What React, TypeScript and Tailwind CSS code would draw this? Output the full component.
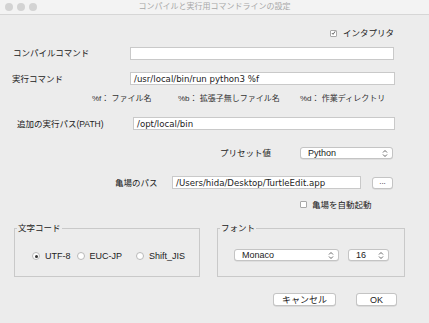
import React from "react";

function UpDown() {
  return (
    <svg width="6" height="9" viewBox="0 0 6 9" className="shrink-0">
      <path d="M1 3.5 L3 1.5 L5 3.5" fill="none" stroke="#555" strokeWidth="0.9" />
      <path d="M1 5.5 L3 7.5 L5 5.5" fill="none" stroke="#555" strokeWidth="0.9" />
    </svg>
  );
}

function Select({ value, className }: { value: string; className: string }) {
  return (
    <div
      className={`flex items-center justify-between h-[12px] bg-white border border-[#c4c4c4] rounded-[3px] shadow-[0_0.5px_0.5px_rgba(0,0,0,0.12)] pl-[7px] pr-[4px] text-[9px] text-[#222] ${className}`}
    >
      <span>{value}</span>
      <UpDown />
    </div>
  );
}

function Field({ value, className }: { value: string; className: string }) {
  return (
    <div
      className={`h-[13px] bg-white border border-[#c9c9c9] flex items-center px-[3px] font-['DejaVu_Sans','Noto_Sans_CJK_JP',sans-serif] text-[8.6px] text-[#222] ${className}`}
    >
      {value}
    </div>
  );
}

function Radio({ label, checked }: { label: string; checked?: boolean }) {
  return (
    <div className="flex items-center gap-[5px]">
      <span className="w-[8px] h-[8px] rounded-full bg-white border border-[#b9b9b9] flex items-center justify-center">
        {checked && <span className="w-[3px] h-[3px] rounded-full bg-[#333]" />}
      </span>
      <span>{label}</span>
    </div>
  );
}

export default function App() {
  return (
    <div className="w-[429px] h-[323px] bg-[#ececec] overflow-hidden font-['Liberation_Sans','Noto_Sans_CJK_JP',sans-serif] text-[#222] text-[8.5px] leading-[10px]">
      {/* title bar */}
      <div className="relative h-[15px] bg-[#f3f3f3] border-b border-[#d6d6d6] flex items-center justify-center">
        <div className="absolute left-[5px] top-[3px] flex gap-[4px]">
          <span className="w-[8px] h-[8px] rounded-full bg-[#d3d3d3]" />
          <span className="w-[8px] h-[8px] rounded-full bg-[#d3d3d3]" />
          <span className="w-[8px] h-[8px] rounded-full bg-[#d3d3d3]" />
        </div>
        <span className="text-[8px] text-[#a8a8a8]">コンパイルと実行用コマンドラインの設定</span>
      </div>

      {/* interpreter */}
      <div className="mt-[12px] h-[12px] flex items-center pl-[330px]">
        <span className="w-[7px] h-[7px] bg-white border border-[#a8a8a8] rounded-[1px] flex items-center justify-center">
          <svg width="6" height="6" viewBox="0 0 6 6">
            <path d="M1 3 L2.5 4.6 L5 1" fill="none" stroke="#333" strokeWidth="0.9" />
          </svg>
        </span>
        <span className="ml-[6px]">インタプリタ</span>
      </div>

      {/* compile */}
      <div className="mt-[8px] h-[12px] flex items-center">
        <span className="pl-[13px] w-[130px]">コンパイルコマンド</span>
        <Field value="" className="w-[264px] h-[12px]" />
      </div>

      {/* exec */}
      <div className="mt-[13px] flex items-center">
        <span className="pl-[12px] w-[130px]">実行コマンド</span>
        <Field value="/usr/local/bin/run python3 %f" className="w-[265px]" />
      </div>

      {/* hints */}
      <div className="mt-[9px] h-[10px] flex items-center text-[8px] text-[#333]">
        <span className="pl-[92px] w-[178px]">%f： ファイル名</span>
        <span className="w-[122px]">%b： 拡張子無しファイル名</span>
        <span>%d： 作業ディレクトリ</span>
      </div>

      {/* PATH */}
      <div className="mt-[13px] flex items-center">
        <span className="pl-[17px] w-[133px]">追加の実行パス(PATH)</span>
        <Field value="/opt/local/bin" className="w-[262px]" />
      </div>

      {/* preset */}
      <div className="mt-[17px] flex items-center">
        <span className="pl-[220px] w-[300px]">プリセット値</span>
        <Select value="Python" className="w-[93px]" />
      </div>

      {/* turtle path */}
      <div className="mt-[17px] flex items-center">
        <span className="pl-[115px] w-[172px]">亀場のパス</span>
        <Field value="/Users/hida/Desktop/TurtleEdit.app" className="w-[189px]" />
        <div className="ml-[11px] w-[21px] h-[12px] bg-white border border-[#c4c4c4] rounded-[3px] shadow-[0_0.5px_0.5px_rgba(0,0,0,0.12)] flex items-center justify-center text-[8px] leading-none pb-[2px]">
          ...
        </div>
      </div>

      {/* auto start */}
      <div className="mt-[9px] h-[13px] flex items-center pl-[300px]">
        <span className="w-[7px] h-[7px] bg-white border border-[#a8a8a8] rounded-[1px]" />
        <span className="ml-[5px]">亀場を自動起動</span>
      </div>

      {/* groups */}
      <div className="mt-[12px] flex pl-[14px] gap-[17px]">
        <fieldset className="w-[186px] h-[54px] border border-[#c9c9c9] px-[0px] pb-0 m-0">
          <legend className="ml-[2px] px-[1px]">文字コード</legend>
          <div className="mt-[18px] flex items-center gap-[6px] pl-[17px] text-[9px]">
            <Radio label="UTF-8" checked />
            <Radio label="EUC-JP" />
            <div className="ml-[8px]">
              <Radio label="Shift_JIS" />
            </div>
          </div>
        </fieldset>
        <fieldset className="w-[188px] h-[54px] border border-[#c9c9c9] p-0 m-0">
          <legend className="ml-[2px] px-[1px]">フォント</legend>
          <div className="mt-[16px] flex items-center pl-[16px] gap-[9px]">
            <Select value="Monaco" className="w-[105px]" />
            <Select value="16" className="w-[41px]" />
          </div>
        </fieldset>
      </div>

      {/* buttons */}
      <div className="mt-[16px] flex pl-[273px] gap-[20px] text-[9px]">
        <div className="w-[63px] h-[13px] bg-white border border-[#c4c4c4] rounded-[3px] shadow-[0_0.5px_0.5px_rgba(0,0,0,0.15)] flex items-center justify-center">
          キャンセル
        </div>
        <div className="w-[41px] h-[13px] bg-white border border-[#c4c4c4] rounded-[3px] shadow-[0_0.5px_0.5px_rgba(0,0,0,0.15)] flex items-center justify-center">
          OK
        </div>
      </div>
    </div>
  );
}
